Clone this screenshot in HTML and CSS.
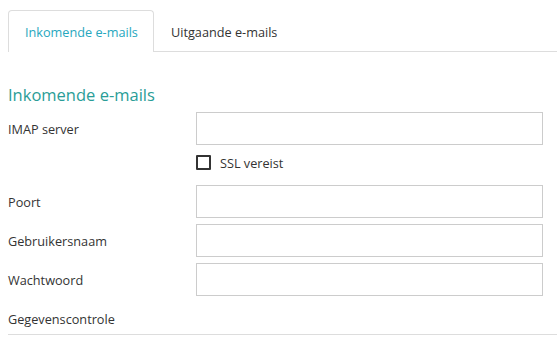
FILE: index.html
```html
<!DOCTYPE html>
<html>
<head>
<meta charset="utf-8">
<link rel="stylesheet" href="styles.css">
</head>
<body>
<div class="page">
  <ul class="tabs">
    <li class="tab active">Inkomende e-mails</li>
    <li class="tab">Uitgaande e-mails</li>
  </ul>
  <h2 class="section-title">Inkomende e-mails</h2>
  <div class="form">
    <div class="row">
      <label class="label">IMAP server</label>
      <div class="input"></div>
    </div>
    <div class="check-row">
      <span class="checkbox"></span>
      <span class="check-label">SSL vereist</span>
    </div>
    <div class="row">
      <label class="label">Poort</label>
      <div class="input"></div>
    </div>
    <div class="row gap">
      <label class="label">Gebruikersnaam</label>
      <div class="input"></div>
    </div>
    <div class="row gap">
      <label class="label">Wachtwoord</label>
      <div class="input"></div>
    </div>
    <div class="footer-row">Gegevenscontrole</div>
  </div>
</div>
</body>
</html>
```
FILE: styles.css
```css
html, body {
  margin: 0;
  padding: 0;
  background: #fff;
}
body {
  font-family: "Open Sans", "Noto Sans", sans-serif;
  font-size: 12.7px;
  color: #333;
}
.page {
  padding: 10px 0 0 8px;
}
.tabs {
  list-style: none;
  margin: 0;
  padding: 0;
  display: flex;
  border-bottom: 1px solid #ddd;
  height: 41px;
}
.tab {
  height: 40px;
  line-height: 42px;
  padding: 0 16px;
  border: 1px solid transparent;
  border-bottom: none;
  color: #333;
  box-sizing: content-box;
  white-space: nowrap;
}
.tab.active {
  border-color: #ddd;
  border-radius: 4px 4px 0 0;
  background: #fff;
  height: 41px;
  color: #26a7be;
  width: 112px;
}
.section-title {
  margin: 32px 0 6px 0;
  font-size: 16.5px;
  line-height: 22px;
  font-weight: normal;
  color: #2a9d97;
}
.row {
  display: flex;
  align-items: center;
}
.row.gap {
  margin-top: 6px;
}
.label {
  width: 188px;
}
.input {
  width: 345px;
  height: 31px;
  border: 1px solid #ccc;
}
.check-row {
  display: flex;
  align-items: center;
  height: 40px;
  padding: 0 0 0 188px;
  box-sizing: border-box;
  padding-bottom: 5px;
}
.checkbox {
  width: 11px;
  height: 11px;
  border: 2px solid #333;
  border-radius: 1px;
}
.check-label {
  margin-left: 9px;
}
.footer-row {
  margin-top: 13px;
  line-height: 20px;
  padding-bottom: 5px;
  border-bottom: 1px solid #ddd;
}
```
